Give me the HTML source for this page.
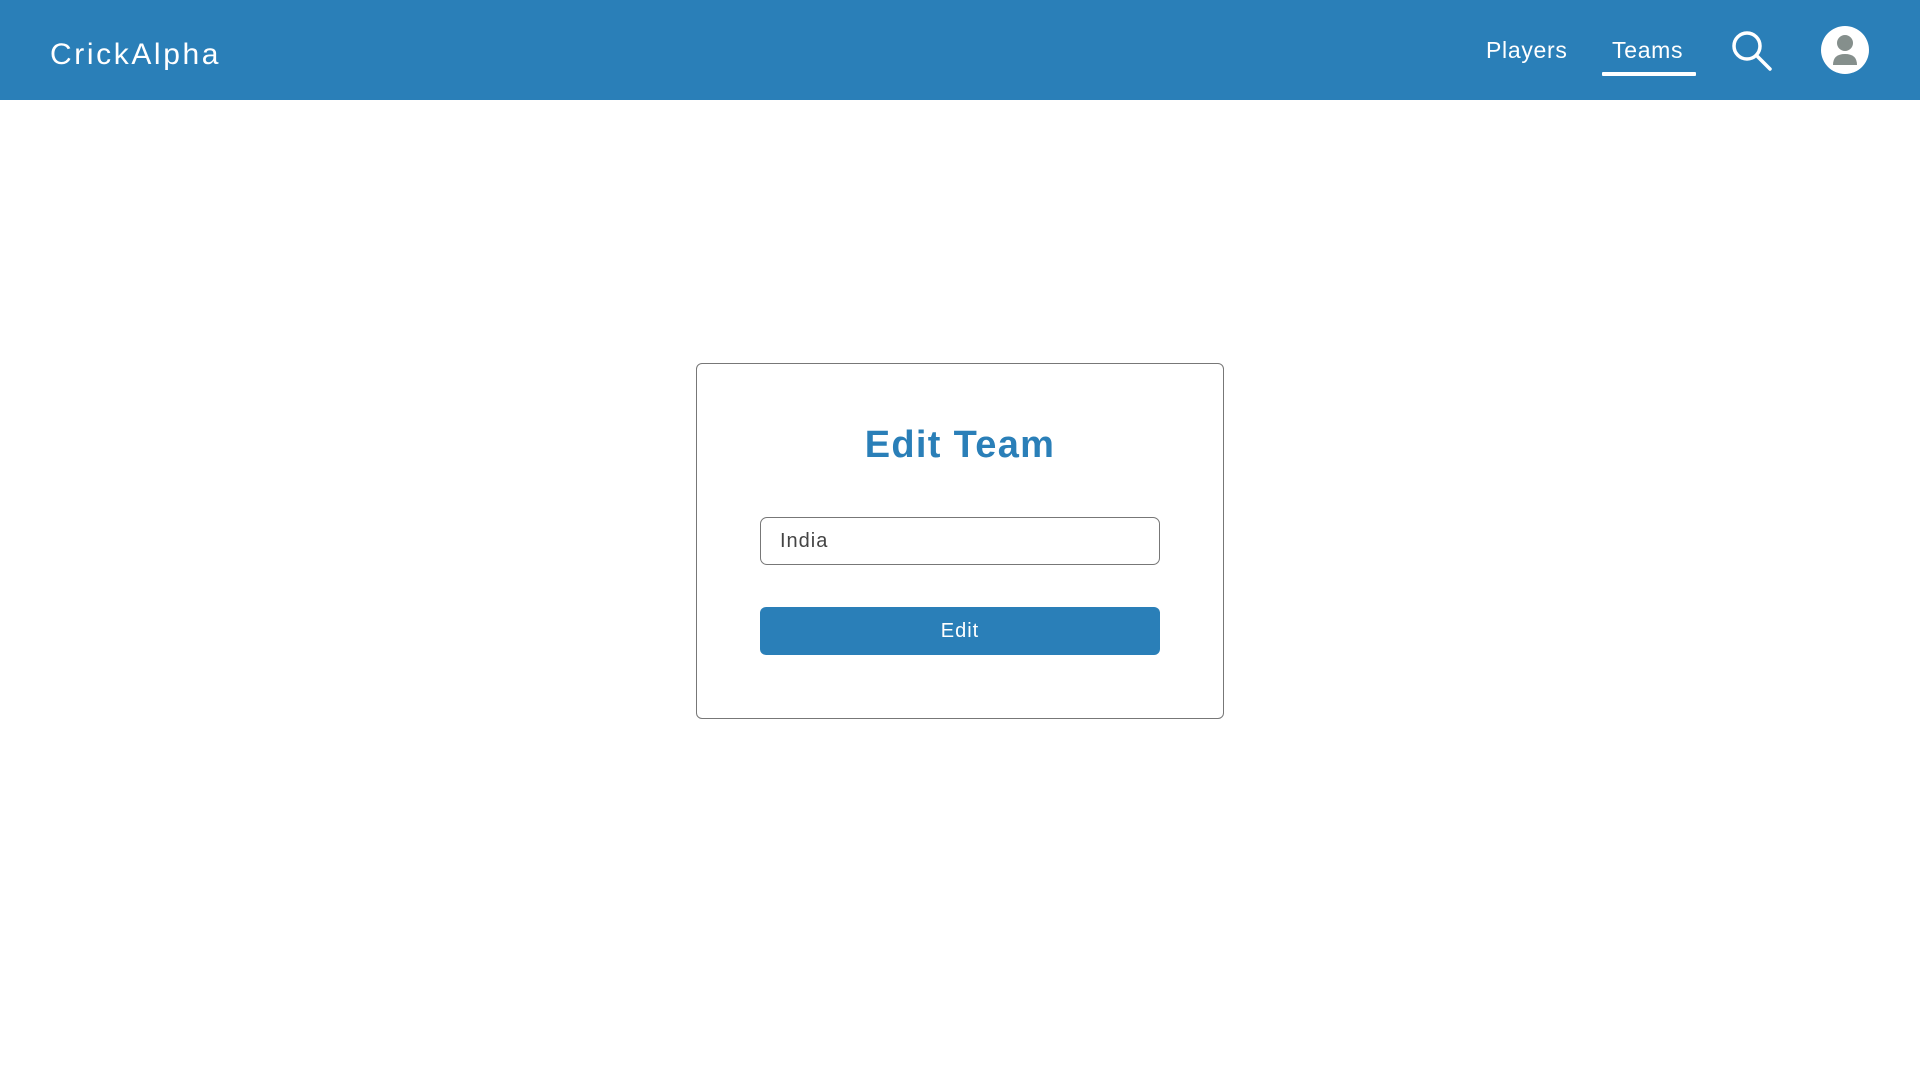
<!DOCTYPE html>
<html><head><style>
body{margin:0;width:1920px;height:1080px;background:#fff;font-family:"Liberation Sans",sans-serif;position:relative;overflow:hidden}
.hdr{position:absolute;left:0;top:0;width:1920px;height:100px;background:#2a7fb8}
.logo{position:absolute;left:50px;top:38px;color:#fff;font-size:30px;letter-spacing:2.6px}
.nav{position:absolute;top:37px;color:#fff;font-size:23px;letter-spacing:.7px}
.ul{position:absolute;left:1602px;top:72px;width:94px;height:4px;background:#fff;border-radius:1px}
.card{position:absolute;left:696px;top:363px;height:356px;border:1.5px solid #777;border-radius:6px;box-sizing:border-box;width:528px}
h1{position:absolute;top:424px;margin:0;text-align:center;color:#2a7fb8;font-size:38px;font-weight:bold;letter-spacing:1.3px}
.inp{position:absolute;left:760px;top:517px;width:400px;height:48px;border:1.5px solid #777;border-radius:7px;box-sizing:border-box;font-size:20px;color:#444;padding:12px 19px;letter-spacing:1px}
.btn{position:absolute;left:760px;top:607px;width:400px;height:48px;background:#2a7fb8;border-radius:6px;color:#fff;text-align:center;line-height:48px;font-size:20px;letter-spacing:1px}
</style></head><body>
<div class="hdr">
<div class="logo">CrickAlpha</div>
<div class="nav" style="left:1486px">Players</div>
<div class="nav" style="left:1612px">Teams</div>
<div class="ul"></div>
<svg style="position:absolute;left:1730px;top:28px" width="46" height="46" viewBox="0 0 46 46"><circle cx="17" cy="18" r="13" fill="none" stroke="#fff" stroke-width="3.5"/><line x1="26.5" y1="27.5" x2="40" y2="41" stroke="#fff" stroke-width="3.5" stroke-linecap="round"/></svg>
<svg style="position:absolute;left:1820px;top:25px" width="50" height="50" viewBox="0 0 50 50"><circle cx="25" cy="25" r="24" fill="#fff"/><circle cx="25" cy="18" r="8" fill="#858f8c"/><path d="M13 40 Q13 29 25 29 Q37 29 37 40 Z" fill="#858f8c"/></svg>
</div>
<div class="card"></div>
<h1 style="left:696px;width:528px">Edit Team</h1>
<div class="inp">India</div>
<div class="btn">Edit</div>
</body></html>
